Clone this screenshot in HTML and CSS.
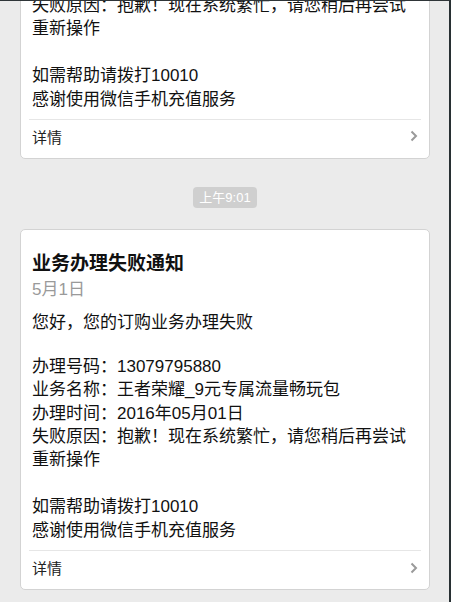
FILE: index.html
```html
<!DOCTYPE html>
<html lang="zh-CN">
<head>
<meta charset="UTF-8"/>
<meta name="viewport" content="width=device-width, initial-scale=1.0"/>
<title>微信手机充值</title>
<link rel="stylesheet" href="styles.css">
</head>
<body>

<div class="chat">

  <div class="card">
    <div class="card-body">
      <h2>业务办理失败通知</h2>
      <div class="date">5月1日</div>
      <p class="greet">您好，您的订购业务办理失败</p>
      <p class="lines">
        办理号码：13079795880<br>
        业务名称：王者荣耀_9元专属流量畅玩包<br>
        办理时间：2016年05月01日<br>
        失败原因：抱歉！现在系统繁忙，请您稍后再尝试重新操作
      </p>
      <p class="lines">
        如需帮助请拨打10010<br>
        感谢使用微信手机充值服务
      </p>
    </div>
    <div class="card-foot">
      <span>详情</span>
      <svg class="arrow" width="8" height="12" viewBox="0 0 8 12"><polyline points="1.5,1.5 6,6 1.5,10.5" fill="none" stroke="#9a9a9a" stroke-width="2"/></svg>
    </div>
  </div>

  <div class="time"><span>上午9:01</span></div>

  <div class="card">
    <div class="card-body">
      <h2>业务办理失败通知</h2>
      <div class="date">5月1日</div>
      <p class="greet">您好，您的订购业务办理失败</p>
      <p class="lines">
        办理号码：13079795880<br>
        业务名称：王者荣耀_9元专属流量畅玩包<br>
        办理时间：2016年05月01日<br>
        失败原因：抱歉！现在系统繁忙，请您稍后再尝试重新操作
      </p>
      <p class="lines">
        如需帮助请拨打10010<br>
        感谢使用微信手机充值服务
      </p>
    </div>
    <div class="card-foot">
      <span>详情</span>
      <svg class="arrow" width="8" height="12" viewBox="0 0 8 12"><polyline points="1.5,1.5 6,6 1.5,10.5" fill="none" stroke="#9a9a9a" stroke-width="2"/></svg>
    </div>
  </div>

</div>

</body>
</html>
```

FILE: styles.css
```css
* { box-sizing: border-box; }
html, body { margin:0; padding:0; }
body {
  background: #ebebeb; color: #111;
  font-family: "Liberation Sans", "Noto Sans CJK SC", sans-serif;
}
.chat {
  height: 100vh; overflow: hidden;
  display: flex; flex-direction: column; justify-content: flex-end;
  padding: 0 19px 12px 20px;
  border-top: 1px solid #2f3538;
  border-right: 2px solid #283033;
}
.card {
  flex-shrink: 0;
  background: #fff;
  border: 1px solid #d3d3d3; border-radius: 5px;
}
.card-body { padding: 21px 11px 8px; }
h2 {
  margin:0; font-size:19px; line-height:25px; font-weight:bold; color:#111;
}
.date { margin-top:2px; font-size:17px; line-height:24px; color:#9a9a9a; }
.greet { margin:9px 0 21px; font-size:17px; line-height:23px; }
.lines { margin:0 0 24px; font-size:17px; line-height:23.3px; }
.lines:last-child { margin-bottom:0; }
.card-foot {
  margin: 0 8px; height: 39px;
  border-top: 1px solid #e6e6e6;
  display:flex; justify-content:space-between; align-items:center;
  padding: 0 3px 5px;
  font-size:15px; color:#222;
}
.time {
  flex-shrink: 0;
  display:flex; justify-content:center;
  margin: 28px 0 21px;
}
.time span {
  background:#cfcfcf; color:#fff;
  font-size:13px; line-height:21px;
  border-radius:4px; width:64px; text-align:center;
}
```
